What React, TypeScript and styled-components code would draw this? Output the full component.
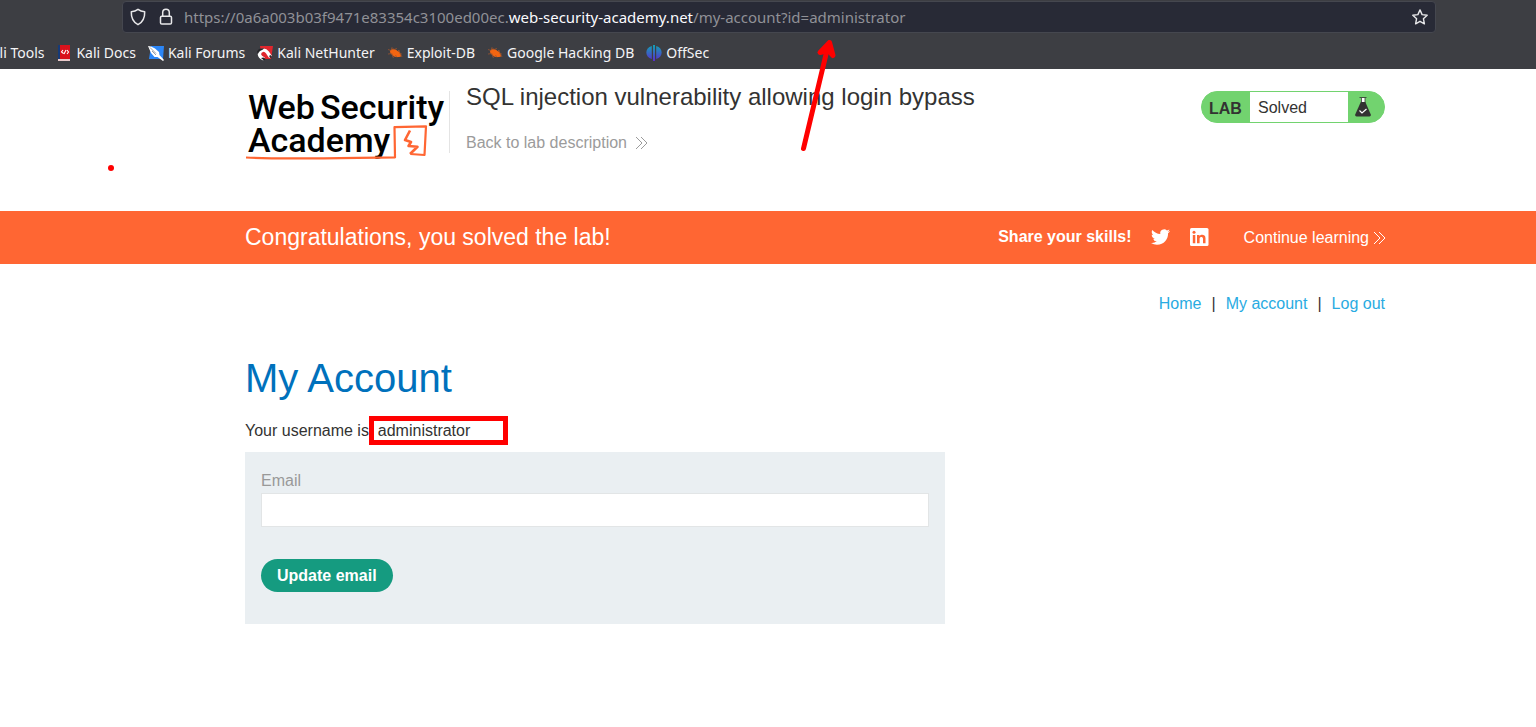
import React from "react";
import styled, { createGlobalStyle } from "styled-components";

const GlobalStyle = createGlobalStyle`
  *, *::before, *::after { box-sizing: border-box; }
  body {
    margin: 0;
    background: #fff;
    color: #333332;
    font-family: "Liberation Sans", Arial, sans-serif;
    font-size: 16px;
    line-height: 20px;
  }
  a { color: inherit; text-decoration: none; }
  h1, h2, h3, p { margin: 0; font-weight: 400; }
  svg { display: block; flex: none; }
`;

const Page = styled.div`
  position: relative;
  overflow: hidden;
`;

/* Browser chrome */
const Chrome = styled.header`
  height: 69px;
  padding: 1px 0 0;
  background: #3d3e43;
  color: #f4f4f6;
  font-family: "Noto Sans", sans-serif;
`;

const AddressBar = styled.div`
  display: flex;
  align-items: center;
  height: 32px;
  margin: 0 100px 0 122px;
  padding: 0 7px;
  background: #282a36;
  border: 1px solid #45474f;
  border-radius: 4px;
`;

const BarButton = styled.button`
  display: flex;
  margin: 0 12px 0 0;
  padding: 0;
  border: 0;
  background: none;
  color: #e8e8ea;
`;

const LockButton = styled(BarButton)`
  margin-right: 10px;
`;

const StarButton = styled(BarButton)`
  margin: 0 0 0 auto;
`;

const Url = styled.span`
  color: #909197;
  font-size: 15px;
  white-space: nowrap;
`;

const Domain = styled.span`
  color: #fbfbfe;
`;

const Bookmarks = styled.nav`
  display: flex;
  align-items: center;
  gap: 12px;
  height: 36px;
  padding-top: 3px;
  font-size: 14px;
`;

const Bookmark = styled.a`
  display: flex;
  align-items: center;
  gap: 4px;
  white-space: nowrap;
`;

const CutBookmark = styled(Bookmark)`
  margin-left: -17px;
`;

/* Lab page */
const Container = styled.div`
  padding: 0 151px 0 245px;
`;

const LabHeader = styled(Container)`
  display: flex;
  align-items: flex-start;
  height: 142px;
  padding-top: 16px;
`;

const LogoLink = styled.a`
  width: 204px;
`;

const TitleBlock = styled.div`
  flex: 1;
  padding-left: 16px;
`;

const Divider = styled.div`
  width: 1px;
  height: 62px;
  margin-top: 6px;
  background: #e4e4e4;
`;

const Title = styled.h2`
  font-size: 24px;
  line-height: 24px;
`;

const BackLink = styled.a`
  display: inline-flex;
  align-items: center;
  gap: 8px;
  margin-top: 24px;
  color: #9b9b9b;
`;

const Status = styled.div`
  display: flex;
  width: 184px;
  height: 32px;
  margin-top: 6px;
  border: 1px solid #72d36f;
  border-radius: 16px;
  background: #72d36f;
  overflow: hidden;
`;

const StatusLabel = styled.strong`
  width: 48px;
  padding-left: 7px;
  line-height: 34px;
`;

const StatusText = styled.span`
  width: 98px;
  padding-left: 8px;
  background: #fff;
  line-height: 32px;
`;

const StatusIcon = styled.span`
  padding: 4px 0 0 6px;
`;

const Banner = styled(Container)`
  display: flex;
  align-items: center;
  height: 53px;
  background: #ff6633;
  color: #fff;
`;

const BannerText = styled.h3`
  flex: 1;
  padding-bottom: 2px;
  font-size: 23px;
`;

const ShareText = styled.strong`
  margin-right: 19px;
  padding-bottom: 2px;
`;

const ShareLink = styled.a`
  margin-right: 19px;
  padding-bottom: 2px;
`;

const ContinueLink = styled.a`
  display: flex;
  align-items: center;
  gap: 4px;
  margin-left: 16px;
  margin-right: -1px;
`;

const AccountNav = styled.nav`
  display: flex;
  justify-content: flex-end;
  gap: 10px;
  padding-top: 30px;
`;

const NavLink = styled.a`
  color: #29abe2;
`;

const Heading = styled.h1`
  margin-top: 40px;
  color: #0071bc;
  font-size: 40px;
  line-height: 48px;
`;

const Username = styled.p`
  margin: 19px 0 11px;
`;

const Marked = styled.span`
  position: relative;
`;

const MarkBox = styled.span`
  position: absolute;
  left: -9px;
  top: -6px;
  width: 139px;
  height: 29px;
  border: 5px solid #ff0000;
`;

const Form = styled.form`
  display: flex;
  flex-direction: column;
  align-items: flex-start;
  max-width: 700px;
  margin-bottom: 32px;
  padding: 19px 16px 32px;
  background: #eaeff2;
`;

const Label = styled.label`
  color: #999;
`;

const Input = styled.input`
  width: 100%;
  height: 34px;
  margin: 2px 0 32px;
  padding: 0 8px;
  border: 1px solid #e2e5e6;
  background: #fff;
  font: inherit;
`;

const Submit = styled.button`
  height: 33px;
  padding: 0 16px;
  border: 0;
  border-radius: 17px;
  background: #159b80;
  color: #fff;
  font: inherit;
  font-weight: 700;
`;

const ArrowMark = styled.svg`
  position: absolute;
  left: 796px;
  top: 34px;
  pointer-events: none;
`;

const DotMark = styled.span`
  position: absolute;
  left: 108px;
  top: 165px;
  width: 6px;
  height: 6px;
  border-radius: 50%;
  background: #ff0000;
`;

const Shield = () => (
  <svg width="16" height="18" viewBox="0 0 16 18" fill="none" stroke="currentColor" strokeWidth="1.500" strokeLinejoin="round">
    <path d="M8 1.300C6 2.900 3.800 3.600 1.300 3.700c-.2 5.400 1.200 10 6.700 13 5.500-3 6.900-7.600 6.700-13C12.200 3.600 10 2.900 8 1.300Z" />
  </svg>
);

const Lock = () => (
  <svg width="16" height="18" viewBox="0 0 16 18" fill="none" stroke="currentColor" strokeWidth="1.500">
    <rect x="2.500" y="8.300" width="11" height="7.800" rx="1.300" />
    <path d="M4.700 8V4.600a3.300 3.300 0 0 1 6.600 0V8" />
  </svg>
);

const Star = () => (
  <svg width="16" height="16" viewBox="0 0 16 16" fill="none" stroke="currentColor" strokeWidth="1.400" strokeLinejoin="round">
    <path d="M8 .9l2.100 4.700 5.100.6-3.800 3.500 1 5.100L8 12.300l-4.400 2.500 1-5.100L.8 6.200l5.100-.6Z" />
  </svg>
);

const DocsIcon = () => (
  <svg width="16" height="16" viewBox="0 0 16 16">
    <path d="M2 0h12v15H2z" fill="#d9121c" />
    <path d="M2 0h2v15H2z" fill="#163a78" />
    <path d="M2 14h12v2H2z" fill="#e9c9ca" />
    <path d="M7 5L5.500 7 7.500 8.500M11 5l1.500 2L11 9M10 5L8 9" fill="none" stroke="#fff" strokeWidth="1.100" />
  </svg>
);

const ForumsIcon = () => (
  <svg width="16" height="16" viewBox="0 0 16 16">
    <path d="M3 1h13l-1 13H1z" fill="#2b86f7" />
    <path d="M0 1l3 .5 4 2 4 3.500.5 3L16 15l-1 1-5.500-4-3 0L3 8z" fill="#fff" />
    <path d="M2 2.500l6 6M4 6l4 4" stroke="#7c8694" strokeWidth=".8" />
  </svg>
);

const NetHunterIcon = () => (
  <svg width="16" height="16" viewBox="0 0 16 16">
    <path d="M3 1h13l-2 13H5z" fill="#e0262d" />
    <path d="M2.500 8.500C3.500 4.500 8 4 10.500 7.500l3 4.500M2.500 8.500C2 11 4 12.500 7 14" fill="none" stroke="#fff" strokeWidth="3.400" />
    <path d="M0 6.500l2-2.500 5-1-1 1.500-3 1.500L.500 9zM12 11l1.500 2L15 12l-1.500-2zM4 13l3 2.500L8.500 14l-2-1.500z" fill="#26262a" />
  </svg>
);

const BugIcon = () => (
  <svg width="16" height="16" viewBox="0 0 16 16">
    <path d="M3 5.500c2-2 6-1.500 7.500.5 2.500.5 3.500 3 3.500 5.500-3 1-6.500 1-8.500-1.500-2-.5-2.500-2.500-2.500-4.500Z" fill="#f26511" />
    <path d="M1 4.500l3 1 1-3 2 2 3-1M1 9l4-.5 1 4 3-2 1 2M11 6l1-1 1 4 2 0M14 10l1 2" stroke="#a8562b" strokeWidth=".7" fill="none" />
  </svg>
);

const OffSecIcon = () => (
  <svg width="16" height="16" viewBox="0 0 16 16">
    <defs>
      <linearGradient id="offsec" gradientUnits="userSpaceOnUse" x1="0" y1="0" x2="0" y2="16">
        <stop offset="0" stopColor="#12a2b4" />
        <stop offset="1" stopColor="#5b2bd0" />
      </linearGradient>
    </defs>
    <path d="M5.800 1v13C-1.500 12-1.500 3 5.800 1ZM10.200 1v13c7.300-2 7.300-11 0-13ZM7 0h2v16H7z" fill="url(#offsec)" />
  </svg>
);

const Logo = () => (
  <svg width="204" height="78" viewBox="0 0 204 78" role="img" aria-label="Web Security Academy">
    <g fill="#000" fontFamily="Roboto, sans-serif" fontSize="34" fontWeight="500">
      <text x="3" y="34">Web</text>
      <text x="75" y="34">Security</text>
      <text x="3" y="67">Academy</text>
    </g>
    <g fill="none" stroke="#ff6633" strokeLinejoin="round">
      <path d="M1 72.500c36 2 90 .5 149-.2L149.500 42.200l31.500-.9-1.500 28.700-14-1" strokeWidth="2.200" />
      <path d="M165 45.500l-5 9.500 6 2-2.500 4 9 .8-7.500 7.200" strokeWidth="2.600" />
    </g>
  </svg>
);

const Chevrons = () => (
  <svg width="13" height="14" viewBox="0 0 13 14" fill="none" stroke="currentColor" strokeWidth="1">
    <path d="M1 1l6 6-6 6M6 1l6 6-6 6" />
  </svg>
);

const Flask = () => (
  <svg width="18" height="22" viewBox="0 0 18 22">
    <path d="M7 2h4v6H7z" fill="#fff" />
    <path d="M5.500 1.500h7M7.500 2v5M11 2v5" stroke="#333332" strokeWidth=".8" fill="none" />
    <path d="M6.800 6h4.500l5.500 12.500q.5 2-1.500 2H2.700q-2 0-1.500-2Z" fill="#333332" />
    <path d="M5.500 14.500l2.500 2.500 4.500-4" fill="none" stroke="#fff" strokeWidth="1.200" />
  </svg>
);

const Twitter = () => (
  <svg width="19" height="20" viewBox="0 0 24 24" fill="currentColor">
    <path d="M23.950 4.570a10 10 0 0 1-2.820.77 4.960 4.960 0 0 0 2.160-2.720c-.95.55-2 .95-3.130 1.180a4.920 4.920 0 0 0-8.380 4.480C7.690 8.100 4.070 6.130 1.640 3.160a4.820 4.820 0 0 0-.67 2.480c0 1.710.87 3.210 2.190 4.100a4.900 4.900 0 0 1-2.230-.62v.06a4.920 4.920 0 0 0 3.950 4.830 5 5 0 0 1-2.210.08 4.940 4.940 0 0 0 4.600 3.420A9.870 9.870 0 0 1 0 19.540a14 14 0 0 0 7.550 2.210c9.050 0 14-7.500 14-13.980 0-.21 0-.42-.02-.63a9.940 9.940 0 0 0 2.460-2.550Z" />
  </svg>
);

const LinkedIn = () => (
  <svg width="20" height="20" viewBox="0 0 20 20">
    <rect x="1" y="1" width="18.500" height="18" rx="1.500" fill="#fff" />
    <path d="M3.800 8h2.500v8.200H3.800zM8 8h2.500v1.200c1.500-2.200 6-1.800 6 2v5H14v-4.500c0-2.500-3.400-2.300-3.400 0v4.500H8z" fill="#ff6633" />
    <circle cx="5" cy="5.200" r="1.500" fill="#ff6633" />
  </svg>
);

const bookmarks = [
  { name: "Kali Docs", Icon: DocsIcon },
  { name: "Kali Forums", Icon: ForumsIcon },
  { name: "Kali NetHunter", Icon: NetHunterIcon },
  { name: "Exploit-DB", Icon: BugIcon },
  { name: "Google Hacking DB", Icon: BugIcon },
  { name: "OffSec", Icon: OffSecIcon },
];

export default function App() {
  return (
    <Page>
      <GlobalStyle />
      <Chrome>
        <AddressBar>
          <BarButton type="button" aria-label="Tracking protection"><Shield /></BarButton>
          <LockButton type="button" aria-label="Site security"><Lock /></LockButton>
          <Url>
            https://0a6a003b03f9471e83354c3100ed00ec.<Domain>web-security-academy.net</Domain>/my-account?id=administrator
          </Url>
          <StarButton type="button" aria-label="Bookmark this page"><Star /></StarButton>
        </AddressBar>
        <Bookmarks>
          <CutBookmark href="#">Kali Tools</CutBookmark>
          {bookmarks.map(({ name, Icon }) => (
            <Bookmark href="#" key={name}><Icon />{name}</Bookmark>
          ))}
        </Bookmarks>
      </Chrome>

      <LabHeader>
        <LogoLink href="#"><Logo /></LogoLink>
        <Divider />
        <TitleBlock>
          <Title>SQL injection vulnerability allowing login bypass</Title>
          <BackLink href="#">Back to lab description <Chevrons /></BackLink>
        </TitleBlock>
        <Status>
          <StatusLabel>LAB</StatusLabel>
          <StatusText>Solved</StatusText>
          <StatusIcon><Flask /></StatusIcon>
        </Status>
      </LabHeader>

      <Banner>
        <BannerText>Congratulations, you solved the lab!</BannerText>
        <ShareText>Share your skills!</ShareText>
        <ShareLink href="#" aria-label="Share on Twitter"><Twitter /></ShareLink>
        <ShareLink href="#" aria-label="Share on LinkedIn"><LinkedIn /></ShareLink>
        <ContinueLink href="#">Continue learning <Chevrons /></ContinueLink>
      </Banner>

      <Container as="main">
        <AccountNav>
          <NavLink href="#">Home</NavLink>
          <span>|</span>
          <NavLink href="#">My account</NavLink>
          <span>|</span>
          <NavLink href="#">Log out</NavLink>
        </AccountNav>
        <Heading>My Account</Heading>
        <Username>
          Your username is: <Marked>administrator<MarkBox /></Marked>
        </Username>
        <Form onSubmit={(event) => event.preventDefault()}>
          <Label htmlFor="email">Email</Label>
          <Input id="email" type="email" />
          <Submit type="submit">Update email</Submit>
        </Form>
      </Container>

      <ArrowMark width="44" height="124" viewBox="0 0 44 124" fill="none" stroke="#ff0000" strokeWidth="5" strokeLinecap="round" strokeLinejoin="round">
        <path d="M7.500 114.500L32 12" />
        <path d="M33.500 8.500L24 18.500l8.500-2 4.500 5Z" fill="#ff0000" />
      </ArrowMark>
      <DotMark />
    </Page>
  );
}
